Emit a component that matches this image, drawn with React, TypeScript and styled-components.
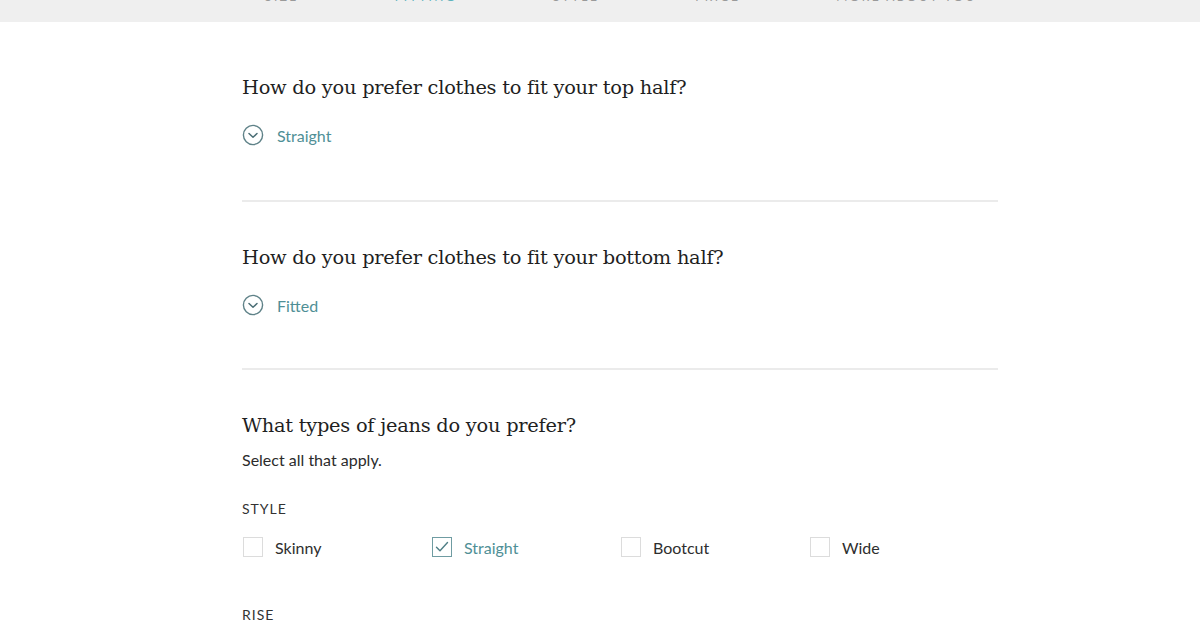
import React from "react";
import styled, { createGlobalStyle } from "styled-components";

const Global = createGlobalStyle`
  html, body { margin: 0; padding: 0; background: #ffffff; }
  body { font-family: "Lato", "Open Sans", sans-serif; color: #2b2b2b; }
`;

const Page = styled.div`
  width: 1200px;
  height: 630px;
  overflow: hidden;
  background: #fff;
`;

const Nav = styled.nav`
  height: 22px;
  background: #efefef;
  display: flex;
  align-items: flex-start;
  gap: 96px;
  padding-left: 265px;
  overflow: hidden;
`;

const NavItem = styled.span<{ $active?: boolean }>`
  display: block;
  margin-top: -9px;
  font-family: "Lato", sans-serif;
  font-size: 12px;
  line-height: 12px;
  letter-spacing: 2.4px;
  color: ${(p) => (p.$active ? "#5fb3bd" : "#9a9a9a")};
  white-space: nowrap;
`;

const Main = styled.main`
  width: 756px;
  margin-left: 242px;
  display: flex;
  flex-direction: column;
`;

const Section = styled.section<{ $pt: number; $pb: number }>`
  padding-top: ${(p) => p.$pt}px;
  padding-bottom: ${(p) => p.$pb}px;
  display: flex;
  flex-direction: column;
`;

const Divider = styled.hr`
  margin: 0;
  border: none;
  height: 2px;
  background: #ebebeb;
`;

const Question = styled.h2`
  margin: 0;
  font-family: "DejaVu Serif", "Liberation Serif", serif;
  font-weight: 400;
  font-size: 19.4px;
  line-height: 28px;
  letter-spacing: -0.25px;
  color: #1f1f1f;
`;

const Answer = styled.div`
  margin-top: 21px;
  display: flex;
  align-items: center;
  gap: 13px;
  height: 24px;
  font-family: "Lato", sans-serif;
  font-size: 16px;
  color: #4f8f96;
`;

const Sub = styled.p`
  margin: 10px 0 0 0;
  font-family: "Lato", sans-serif;
  font-size: 16px;
  line-height: 20px;
  color: #2b2b2b;
`;

const Label = styled.div<{ $mt: number }>`
  margin-top: ${(p) => p.$mt}px;
  font-family: "Lato", sans-serif;
  font-size: 14px;
  line-height: 18px;
  letter-spacing: 1px;
  color: #333;
`;

const Options = styled.div`
  margin-top: 17px;
  display: grid;
  grid-template-columns: repeat(4, 189px);
`;

const Option = styled.label<{ $checked?: boolean }>`
  display: flex;
  align-items: center;
  gap: 12px;
  height: 24px;
  font-family: "Lato", sans-serif;
  font-size: 16px;
  color: ${(p) => (p.$checked ? "#4f8f96" : "#2e2e2e")};
`;

const Box = styled.span<{ $checked?: boolean }>`
  box-sizing: border-box;
  width: 20px;
  height: 20px;
  margin-left: 1px;
  border: 1px solid ${(p) => (p.$checked ? "#6f9ca2" : "#dcdcdc")};
  display: flex;
  align-items: center;
  justify-content: center;
`;

const Chevron = () => (
  <svg width="22" height="22" viewBox="0 0 22 22" fill="none">
    <circle cx="11" cy="11" r="9.6" stroke="#5f8288" strokeWidth="1.4" />
    <path d="M7 9.5 L11 13.3 L15 9.5" stroke="#4c6f76" strokeWidth="1.5" strokeLinecap="round" strokeLinejoin="round" />
  </svg>
);

const Check = () => (
  <svg width="14" height="12" viewBox="0 0 14 12" fill="none">
    <path d="M1.5 6.2 L5 9.8 L12.5 1.5" stroke="#4f7f86" strokeWidth="1.4" strokeLinecap="round" strokeLinejoin="round" />
  </svg>
);

const styles = [
  { name: "Skinny", checked: false },
  { name: "Straight", checked: true },
  { name: "Bootcut", checked: false },
  { name: "Wide", checked: false },
];

export default function App() {
  return (
    <Page>
      <Global />
      <Nav>
        <NavItem>SIZE</NavItem>
        <NavItem $active>FITTING</NavItem>
        <NavItem>STYLE</NavItem>
        <NavItem>PRICE</NavItem>
        <NavItem>MORE ABOUT YOU</NavItem>
      </Nav>
      <Main>
        <Section $pt={52} $pb={53}>
          <Question>How do you prefer clothes to fit your top half?</Question>
          <Answer>
            <Chevron />
            Straight
          </Answer>
        </Section>
        <Divider />
        <Section $pt={42} $pb={51}>
          <Question>How do you prefer clothes to fit your bottom half?</Question>
          <Answer>
            <Chevron />
            Fitted
          </Answer>
        </Section>
        <Divider />
        <Section $pt={42} $pb={0}>
          <Question>What types of jeans do you prefer?</Question>
          <Sub>Select all that apply.</Sub>
          <Label $mt={30}>STYLE</Label>
          <Options>
            {styles.map((s) => (
              <Option key={s.name} $checked={s.checked}>
                <Box $checked={s.checked}>{s.checked && <Check />}</Box>
                {s.name}
              </Option>
            ))}
          </Options>
          <Label $mt={47}>RISE</Label>
        </Section>
      </Main>
    </Page>
  );
}
